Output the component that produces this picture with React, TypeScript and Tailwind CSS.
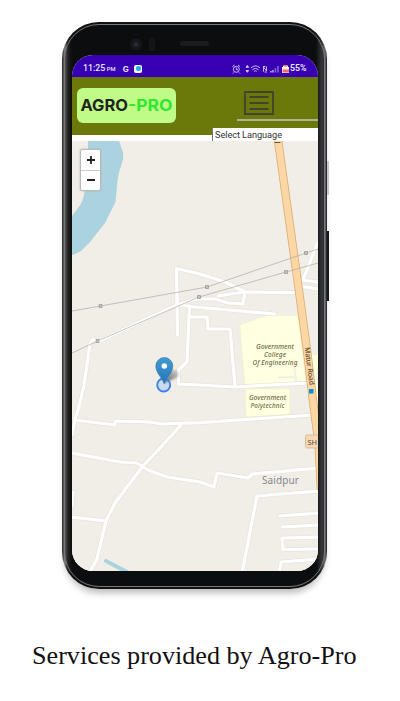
import React from "react";

const roads = [
  "M177.5 335L176.5 268.5L200 274L225 282L245 292L298 292.5",
  "M218 296L245 292L243 304L228 303L215 299L195 299",
  "M196 299L177 305L97 342L93 339L90 344L84 385L80 403L75 420L72 435",
  "M177 304.5L195 307L275 314",
  "M189.5 307L187 362L178.5 370L178.5 384L200 385L235 387L307 383L319 375",
  "M190 317L207 317L208 329L230 329L235 386",
  "M303 280L318 242M301 280L318 282M302 286.5L318 289",
  "M75 420L114.5 425L116 421L150 422L162 424L200 422.7L312 415",
  "M71 453L120 462L137 463L148 470L167 477L200 482L214 487L217 473L248 478L252 474L319 468",
  "M181 425L160 448L143 466L127 487L115 503L106 521L97 559L90 572",
  "M71 517L106 521M73 492L72 506",
  "M319 491L257 496L242 573",
  "M280 516L319 513M282 527L319 525M319 537L282 538L283 549.5L319 549M319 559L281 562L279 573",
];

const pylons = [[100.5, 306], [97.5, 341], [207, 287], [199, 297], [286, 272], [306, 253]];

function RoadMap() {
  return (
    <svg className="block h-[430px] w-full" viewBox="72 141 246 430" preserveAspectRatio="none">
      <path fill="#f1eee7" d="M72 141H318V571H72Z" />
      <path fill="#aad3df" d="M88 141H119L123 152Q124 158 121 166Q118 174 117 186L115.500 202L105 223L90 242L81 251Q76 254 72 255V216L78 208Q83 202 84.500 192L88 170Z" />
      <g fill="#ffffe1" stroke="#f7f3c1" strokeWidth=".6">
        <path d="M240 325L268 315L298 316L306 384L245 386Z" />
        <path d="M245.500 389H289.500L290 414L246 417Z" />
        <path d="M309 355H318V404H315Z" />
      </g>
      <path d="M106 561L127 572" stroke="#aad3df" strokeWidth="4" strokeLinecap="round" />
      <g fill="none" strokeLinejoin="round" strokeLinecap="round">
        <path d="M279 377.500L295 377M293.500 360L296 382" stroke="#f4f1e2" strokeWidth="2.400" />
        <g stroke="#e6e3de" strokeWidth="4.500">{roads.map((d) => <path key={d} d={d} />)}</g>
        <g stroke="#fff" strokeWidth="3.200">{roads.map((d) => <path key={d} d={d} />)}</g>
        <path d="M278 140L297.500 280L307 350L313.500 405L318.500 443L321 490" stroke="#d9ad70" strokeWidth="8.400" strokeLinecap="butt" />
        <path d="M278 140L297.500 280L307 350L313.500 405L318.500 443L321 490" stroke="#fcd6a4" strokeWidth="6.800" strokeLinecap="butt" />
        <path d="M275 142.500H280" stroke="#665744" />
        <path d="M72 311L100.500 306L207 287L306 253L318 249M72 353L97.500 341L199 297L286 272L318 263" stroke="#b5b3ae" strokeWidth=".8" />
      </g>
      {pylons.map(([x, y]) => (
        <rect key={x} x={x - 1.4} y={y - 1.4} width="2.800" height="2.800" fill="#c6c3be" stroke="#9b9995" strokeWidth=".8" />
      ))}
      <g className="font-['Noto_Sans',sans-serif] text-[6.5px] font-medium italic" fill="#6f6b42" stroke="#ffffe1" strokeWidth="1" paintOrder="stroke" textAnchor="middle">
        <text x="275" y="349" textLength="38" lengthAdjust="spacingAndGlyphs">Government</text>
        <text x="275" y="357" textLength="22">College</text>
        <text x="275" y="365" textLength="45">Of Engineering</text>
        <text x="267.500" y="399.500" textLength="37" lengthAdjust="spacingAndGlyphs">Government</text>
        <text x="267.500" y="407.500" textLength="34">Polytechnic</text>
      </g>
      <text className="font-['Noto_Sans',sans-serif] text-[7px] font-medium" fill="#594932" transform="translate(304.800 347.500) rotate(83)" textLength="38">Matur Road</text>
      <rect x="309" y="389" width="4.500" height="4.500" fill="#0092da" />
      <text className="font-['Noto_Sans',sans-serif] text-[10px]" x="262" y="484" fill="#85858a" stroke="#f5f2ed" strokeWidth="1" paintOrder="stroke" textLength="37">Saidpur</text>
      <rect x="305.500" y="435" width="18" height="13" rx="1.500" fill="#f4d7b7" stroke="#d7b58d" strokeWidth=".8" />
      <text className="font-['Noto_Sans',sans-serif] text-[7.5px]" x="307.500" y="444.500" fill="#665038">SH</text>
      <defs>
        <linearGradient id="pin" x1="0" x2="0" y1="0" y2="1"><stop stopColor="#419bd2" /><stop offset="1" stopColor="#2575b7" /></linearGradient>
        <linearGradient id="pinShadow" x1="0" x2="1" y1="1" y2="0"><stop stopColor="#111" stopOpacity=".7" /><stop offset="1" stopColor="#555" stopOpacity=".2" /></linearGradient>
        <filter id="soft" x="-30%" y="-30%" width="160%" height="160%"><feGaussianBlur stdDeviation="1.100" /></filter>
      </defs>
      <path d="M164.500 383L169 373Q172 368 178 371Q180 375 176 378Z" fill="url(#pinShadow)" filter="url(#soft)" />
      <circle cx="163.700" cy="385" r="6.500" fill="#3388ff" fillOpacity=".2" stroke="#397ff0" strokeWidth="1.800" />
      <path d="M164.300 384C161.800 377 155.800 373 155.800 366A8.500 8.500 0 0 1 172.800 366C172.800 373 166.800 377 164.300 384Z" fill="url(#pin)" stroke="#3679ac" strokeWidth=".6" />
      <circle cx="164.300" cy="366" r="2.800" fill="#fff" />
    </svg>
  );
}

function StatusBar() {
  return (
    <div className="flex h-[22px] shrink-0 items-center bg-[#3700b3] pt-[5px] pl-[11px] pr-[10px] font-['Roboto',sans-serif] font-medium text-[#ece5ff]">
      <span className="text-[8.8px] leading-none whitespace-nowrap">11:25</span>
      <span className="ml-[1.500px] w-[10px] pt-[2px] text-[5.800px] leading-none">PM</span>
      <span className="ml-[6px] w-[7px] font-['Inter',sans-serif] text-[8px] leading-none font-bold">G</span>
      <span className="ml-[4.500px] flex size-[8px] items-center justify-center rounded-[2px] bg-white"><span className="size-[4.5px] rounded-[2px] bg-[#28aee8]" /></span>
      <svg className="ml-auto h-[10px] w-[58px]" viewBox="231 64 58 10" fill="none" stroke="#d9ceff" strokeWidth=".9">
        <circle cx="235.300" cy="69.300" r="3" /><path d="M235.300 67.500V69.700H237M231.500 66.500L233.500 65M237 65L239 66.500M232.500 72.500L231.700 73.500M238 72.500L239 73.500" />
        <path d="M245 67.300L246.300 65.500L247.600 67.300ZM245 70.500L246.300 72.300L247.600 70.500Z" fill="#d9ceff" />
        <path d="M250 67.800Q254.500 64 259 67.800M251.500 69.600Q254.500 67 257.500 69.600M253.200 71.300Q254.500 70.300 255.800 71.300" />
        <path d="M262.500 71.700V67L265.500 71V66.500M262 66.500H264.500M263.500 72H266" />
        <path d="M270 72.500V71M272 72.500V70" strokeWidth="1.300" /><path d="M274.500 72.500V68M277 72.500V66" stroke="#8567d2" strokeWidth="1.500" />
        <path d="M282 67V65.500H287V67H288V73H281V67Z" fill="#fff0ed" stroke="none" /><path d="M281.500 69.500H288V72.500H281.500ZM283 65H286V66.500H283Z" fill="#ee6c65" stroke="none" />
      </svg>
      <span className="w-[18px] text-[8.8px] leading-none font-semibold">55%</span>
    </div>
  );
}

function Header() {
  return (
    <header className="relative flex h-[64px] shrink-0 border-b-[6px] border-white bg-[#6a790a] pl-[4.500px] pt-[11px]">
      <div className="flex h-[35px] w-[99px] items-center justify-center rounded-[6px] bg-[#c0fb88] font-['Inter',sans-serif] font-bold text-[#20241e]">
        <svg className="h-[35px] w-[99px]" viewBox="0 0 99 35">
          <text x="3.500" y="23.300" fill="currentColor" fontSize="16" textLength="47.500" lengthAdjust="spacingAndGlyphs">AGRO</text>
          <text x="51" y="23.300" fill="#2fe82f" fontSize="16" textLength="44.500" lengthAdjust="spacingAndGlyphs">-PRO</text>
        </svg>
      </div>
      <div className="ml-[61.500px] h-[33px] w-[81px] border-b-2 border-[#adb195]">
        <svg className="ml-[7px] mt-[3px] h-[24px] w-[30px]" viewBox="0 0 30 24" fill="none" stroke="#44432f" strokeWidth="1.900">
          <path d="M1 1H29V23H1ZM5.500 6H24.500M5.500 12H24.500M5.500 18H24.500" />
        </svg>
      </div>
      <div className="absolute left-[140px] top-[51px] flex h-[13px] w-[106px] items-center border-l border-[#777] bg-white pl-[2px] font-['Roboto',sans-serif] text-[9.2px] leading-none text-[#333]">
        <svg className="h-[13px] w-[72px] overflow-visible" viewBox="0 0 72 13"><text x="0" y="10.300" fill="currentColor" textLength="67">Select Language</text></svg>
      </div>
    </header>
  );
}

export default function App() {
  return (
    <main className="h-[701px] w-[400px] overflow-hidden bg-white pt-[22px]">
      <div className="relative ml-[62px] h-[567px] w-[265px] rounded-[37px] bg-[linear-gradient(90deg,#222_0,#888_3px,#252525_5px,#111_10px,#111_255px,#333_260px,#777_263px,#111_265px)] p-[2px] shadow-[0_7px_7px_-3px_#bbb]">
        <div className="absolute -right-[2px] top-[139px] h-[34px] w-[2px] bg-[#c8c8c8]" />
        <div className="absolute -right-[2px] top-[209px] h-[70px] w-[2px] bg-[#17181a]" />
        <div className="h-full rounded-[35px] border border-[#777] bg-[linear-gradient(90deg,#555_0,#222_3px,#0c0d0e_7px,#0c0d0e_251px,#35373a_257px,#222_261px)]">
          <div className="flex h-[30px] items-start pt-[12px]">
            <svg className="h-[15px] w-full" viewBox="0 0 259 15">
              <circle cx="71" cy="7.500" r="6" fill="#16171a" /><circle cx="71" cy="7.500" r="2.500" fill="#252a30" />
              <rect x="84" y="1" width="6" height="13" rx="2" fill="#151617" /><rect x="115" y="4" width="29" height="5" rx="2.500" fill="#1b1c1d" />
            </svg>
          </div>
          <div className="ml-[7px] flex h-[516px] w-[246px] flex-col overflow-hidden rounded-[21px] bg-white">
            <StatusBar />
            <Header />
            <RoadMap />
          </div>
        </div>
        <div className="absolute left-[18px] top-[127px] flex h-[42px] w-[21px] flex-col overflow-hidden rounded-[2px] border border-[#b9b9b5] bg-white shadow-[0_0_2px_#aaa]">
          <div className="flex flex-1 items-center justify-center border-b border-[#ccc]"><svg className="size-[8px]" viewBox="0 0 8 8" stroke="#222" strokeWidth="1.800"><path d="M0 4H8M4 0V8" /></svg></div>
          <div className="flex flex-1 items-center justify-center"><svg className="size-[8px]" viewBox="0 0 8 8" stroke="#222" strokeWidth="1.800"><path d="M0 4H8" /></svg></div>
        </div>
      </div>
      <p className="mt-[52px] w-[400px] pl-[32px] font-['Liberation_Serif',serif] text-[26.15px] leading-[30px] whitespace-nowrap text-[#111]">Services provided by Agro-Pro</p>
    </main>
  );
}
